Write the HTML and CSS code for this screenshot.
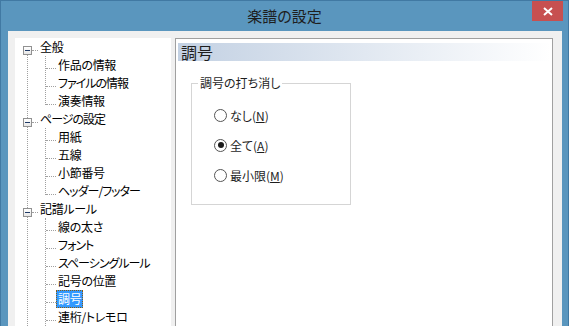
FILE: index.html
```html
<!DOCTYPE html>
<html lang="ja">
<head>
  <meta charset="UTF-8">
  <title>楽譜の設定</title>
  <link rel="stylesheet" href="styles.css">
</head>
<body>
  <div class="window">
    <div class="titlebar">
      <div class="title">楽譜の設定</div>
      <div class="close">
        <svg width="10" height="9" viewBox="0 0 10 9"><path d="M1 1 L9 8 M9 1 L1 8" stroke="#fff" stroke-width="2"/></svg>
      </div>
    </div>

    <div class="client">
      <div class="tree-panel">
        <ul class="tree">
          <li>
            <div class="row"><span class="toggle"></span><span class="dash"></span><span class="label">全般</span></div>
            <ul class="children">
              <li class="row"><span class="dash"></span><span class="label">作品の情報</span></li>
              <li class="row"><span class="dash"></span><span class="label kana">ファイルの情報</span></li>
              <li class="row"><span class="dash"></span><span class="label">演奏情報</span></li>
            </ul>
          </li>
          <li>
            <div class="row"><span class="toggle"></span><span class="dash"></span><span class="label kana">ページの設定</span></div>
            <ul class="children">
              <li class="row"><span class="dash"></span><span class="label">用紙</span></li>
              <li class="row"><span class="dash"></span><span class="label">五線</span></li>
              <li class="row"><span class="dash"></span><span class="label">小節番号</span></li>
              <li class="row"><span class="dash"></span><span class="label kana">ヘッダー/フッター</span></li>
            </ul>
          </li>
          <li>
            <div class="row"><span class="toggle"></span><span class="dash"></span><span class="label">記譜ルール</span></div>
            <ul class="children cont">
              <li class="row"><span class="dash"></span><span class="label">線の太さ</span></li>
              <li class="row"><span class="dash"></span><span class="label kana">フォント</span></li>
              <li class="row"><span class="dash"></span><span class="label kana">スペーシングルール</span></li>
              <li class="row"><span class="dash"></span><span class="label">記号の位置</span></li>
              <li class="row"><span class="dash"></span><span class="label selected">調号</span></li>
              <li class="row"><span class="dash"></span><span class="label">連桁/トレモロ</span></li>
            </ul>
          </li>
        </ul>
      </div>

      <div class="page">
        <div class="page-head">調号</div>
        <fieldset class="group">
          <legend>調号の打ち消し</legend>
          <div class="option"><span class="radio"></span><span>なし(<u>N</u>)</span></div>
          <div class="option"><span class="radio on"></span><span>全て(<u>A</u>)</span></div>
          <div class="option"><span class="radio"></span><span>最小限(<u>M</u>)</span></div>
        </fieldset>
      </div>
    </div>
  </div>
</body>
</html>
```

FILE: styles.css
```css
body {
  margin: 0;
  font-family: "Noto Sans CJK JP", sans-serif;
  font-feature-settings: "palt" 1;
  color: #000;
}
.window {
  width: 569px;
  height: 326px;
  box-sizing: border-box;
  background: #5a96be;
  border: 1px solid #4179a3;
  border-bottom: none;
  display: flex;
  flex-direction: column;
  overflow: hidden;
}
.titlebar {
  height: 30px;
  display: grid;
  grid-template-columns: 1fr auto 1fr;
  align-items: start;
}
.title {
  grid-column: 2;
  font-size: 15px;
  line-height: 29px;
  color: #1e1e1e;
}
.close {
  grid-column: 3;
  justify-self: end;
  margin-right: 5px;
  width: 31px;
  height: 20px;
  background: #c75050;
  display: flex;
  align-items: center;
  justify-content: center;
}
.client {
  flex: 1;
  margin: 0 6px 0 7px;
  padding: 7px 9px 0 7px;
  background: #f0f0f0;
  display: flex;
  gap: 4px;
  min-height: 0;
}

/* tree view */
.tree-panel {
  width: 156px;
  flex-shrink: 0;
  background: #fff;
  overflow: hidden;
  font-size: 12px;
}
.tree, .children {
  list-style: none;
  margin: 0;
  padding: 0;
}
.tree {
  position: relative;
}
.tree::before {
  content: "";
  position: absolute;
  left: 12px;
  top: 17px;
  bottom: 0;
  border-left: 1px dotted #a0a0a0;
}
.row {
  display: flex;
  align-items: flex-start;
  height: 18px;
  padding-left: 8px;
}
.toggle {
  position: relative;
  width: 9px;
  height: 9px;
  box-sizing: border-box;
  margin-top: 8px;
  border: 1px solid #919191;
  background: linear-gradient(#fff, #e6e6e6);
}
.toggle::after {
  content: "";
  position: absolute;
  left: 1px;
  top: 3px;
  width: 5px;
  height: 1px;
  background: #1f3a66;
}
.dash {
  width: 6px;
  height: 12px;
  border-bottom: 1px dotted #a0a0a0;
}
.label {
  padding: 0 2px;
  line-height: 18px;
  height: 18px;
  white-space: nowrap;
  letter-spacing: -0.3px;
}
.label.kana {
  letter-spacing: -1px;
}
.label.selected {
  background: #3399ff;
  color: #fff;
  outline: 1px dotted #8a5a10;
  outline-offset: -1px;
}
.children {
  position: relative;
}
.children::before {
  content: "";
  position: absolute;
  left: 30px;
  top: 0;
  bottom: 5px;
  border-left: 1px dotted #a0a0a0;
}
.children.cont::before {
  bottom: 0;
}
.children .row {
  padding-left: 31px;
}
.children .dash {
  width: 10px;
}

/* settings page */
.page {
  flex: 1;
  background: #fff;
  border: 1px solid #a0a0a0;
  border-bottom: none;
}
.page-head {
  margin: 4px 1px 0 2px;
  height: 18px;
  padding-left: 3px;
  background: linear-gradient(to right, #c3d1e3, #fff);
  font-size: 16px;
  line-height: 18px;
  color: #1e1e1e;
}
.group {
  width: 160px;
  box-sizing: border-box;
  margin: 14px 0 0 15px;
  padding: 9px 0 14px 0;
  border: 1px solid #d5d5d5;
  font-size: 12px;
  color: #1e1e1e;
  min-inline-size: 0;
}
.group legend {
  margin-left: 6px;
  padding: 0 2px;
  line-height: 16px;
}
.option {
  display: flex;
  align-items: center;
  gap: 3px;
  height: 30px;
  margin-left: 22px;
}
.radio {
  width: 13px;
  height: 13px;
  box-sizing: border-box;
  border: 1px solid #555;
  border-radius: 50%;
  background: #fff;
  display: flex;
  align-items: center;
  justify-content: center;
}
.radio.on::after {
  content: "";
  width: 6px;
  height: 6px;
  border-radius: 50%;
  background: #1a1a1a;
}
```
